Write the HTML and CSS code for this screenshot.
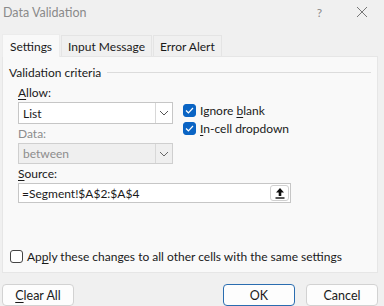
FILE: index.html
```html
<!DOCTYPE html>
<html lang="en">
<head>
  <meta charset="UTF-8">
  <title>Data Validation</title>
  <link rel="stylesheet" href="styles.css">
</head>
<body>
  <div class="dialog">
    <div class="titlebar">
      <span class="title">Data Validation</span>
      <span class="help">?</span>
      <svg class="close" width="12" height="12" viewBox="0 0 12 12">
        <path d="M1 1 L11 11 M11 1 L1 11" stroke="#777" stroke-width="1" fill="none"/>
      </svg>
    </div>

    <div class="tabs">
      <div class="tab active">Settings</div>
      <div class="tab">Input Message</div>
      <div class="tab">Error Alert</div>
    </div>

    <div class="panel">
      <div class="group-title">
        <span>Validation criteria</span>
        <div class="rule"></div>
      </div>

      <div class="criteria">
        <div class="col">
          <div class="label first"><u>A</u>llow:</div>
          <div class="select">
            <span class="value">List</span>
            <span class="arrow">
              <svg width="10" height="6" viewBox="0 0 10 6"><path d="M1 1 L5 5 L9 1" stroke="#555" fill="none"/></svg>
            </span>
          </div>
          <div class="label disabled">Data:</div>
          <div class="select disabled">
            <span class="value">between</span>
            <span class="arrow">
              <svg width="10" height="6" viewBox="0 0 10 6"><path d="M1 1 L5 5 L9 1" stroke="#666" fill="none"/></svg>
            </span>
          </div>
        </div>
        <div class="checks">
          <label class="check">
            <span class="box checked">
              <svg width="9" height="7" viewBox="0 0 9 7"><path d="M1 3.5 L3.4 5.8 L8 1" stroke="#fff" stroke-width="1.2" fill="none"/></svg>
            </span>
            <span>Ignore <u>b</u>lank</span>
          </label>
          <label class="check">
            <span class="box checked">
              <svg width="9" height="7" viewBox="0 0 9 7"><path d="M1 3.5 L3.4 5.8 L8 1" stroke="#fff" stroke-width="1.2" fill="none"/></svg>
            </span>
            <span><u>I</u>n-cell dropdown</span>
          </label>
        </div>
      </div>

      <div class="label"><u>S</u>ource:</div>
      <div class="source">
        <span class="value">=Segment!$A$2:$A$4</span>
        <span class="pick">
          <svg width="10" height="12" viewBox="0 0 10 12"><path d="M5 1 L9 5.5 L6.3 5.5 L6.3 9 L3.7 9 L3.7 5.5 L1 5.5 Z" fill="#111"/><rect x="0.5" y="10.3" width="9" height="1.4" fill="#111"/></svg>
        </span>
      </div>

      <label class="check apply">
        <span class="box"></span>
        <span>Ap<u>p</u>ly these changes to all other cells with the same settings</span>
      </label>
    </div>

    <div class="footer">
      <button class="btn"><u>C</u>lear All</button>
      <div class="spacer"></div>
      <button class="btn primary">OK</button>
      <button class="btn">Cancel</button>
    </div>
  </div>
</body>
</html>
```

FILE: styles.css
```css
body {
  margin: 0;
  background: #f0f0f0;
  font-family: Lato, "Noto Sans", sans-serif;
  font-size: 12px;
  color: #1a1a1a;
  overflow: hidden;
}
.dialog {
  width: 384px;
  height: 306px;
  display: flex;
  flex-direction: column;
}
.titlebar {
  height: 24px;
  display: flex;
  align-items: center;
  padding: 0 0 0 3px;
}
.title {
  color: #8a8a8a;
  font-size: 12.5px;
  flex: 1;
}
.help {
  color: #8a8a8a;
  margin-right: 34px;
}
.close {
  margin-right: 16px;
}
.tabs {
  display: flex;
  align-items: flex-end;
  height: 32px;
  margin-left: 2px;
}
.tab {
  height: 20px;
  line-height: 21px;
  padding: 0 6px;
  border: 1px solid #e4e4e4;
  border-bottom: none;
  background: #f0f0f0;
  margin-right: 1px;
}
.tab.active {
  height: 22px;
  line-height: 24px;
  padding: 0 7px;
  background: #f9f9f9;
  border-color: #ececec;
  margin-bottom: -1px;
  position: relative;
  z-index: 1;
}
.panel {
  margin: 0 6px 0 2px;
  height: 217px;
  background: #f9f9f9;
  border: 1px solid #e6e6e6;
  padding: 0 0 0 6px;
  box-sizing: border-box;
  display: flex;
  flex-direction: column;
}
.group-title {
  display: flex;
  align-items: center;
  height: 14px;
  margin-top: 8px;
}
.group-title span {
  margin-right: 6px;
}
.rule {
  flex: 1;
  height: 1px;
  background: #dcdcdc;
  margin-right: 6px;
}
.criteria {
  display: flex;
  padding-left: 9px;
}
.col {
  width: 155px;
}
.label {
  height: 18px;
  margin-top: 1px;
  line-height: 18px;
}
.label.first {
  margin-top: 5px;
}
.panel > .label {
  margin-left: 9px;
}
.label.disabled {
  color: #8c8c8c;
}
.select {
  height: 22px;
  box-sizing: border-box;
  border: 1px solid #c6c6c6;
  background: #fff;
  display: flex;
  align-items: center;
}
.select .value {
  flex: 1;
  padding-left: 4px;
}
.select .arrow {
  width: 16px;
  height: 20px;
  border-left: 1px solid #d8d8d8;
  display: flex;
  align-items: center;
  justify-content: center;
}
.select.disabled {
  height: 21px;
  background: #efefef;
  border-color: #cfcfcf;
  color: #8c8c8c;
}
.select.disabled .arrow {
  height: 19px;
}
.checks {
  display: flex;
  flex-direction: column;
  gap: 5px;
  margin-top: 25px;
  margin-left: 10px;
}
.check {
  display: flex;
  align-items: center;
  gap: 4px;
  height: 13px;
}
.box {
  width: 13px;
  height: 13px;
  box-sizing: border-box;
  border: 1px solid #555;
  border-radius: 3px;
  background: #fff;
  display: flex;
  align-items: center;
  justify-content: center;
}
.box.checked {
  background: #0a64c4;
  border-color: #0a64c4;
}
.source {
  margin-left: 9px;
  width: 273px;
  height: 20px;
  box-sizing: border-box;
  border: 1px solid #c6c6c6;
  background: #fff;
  display: flex;
  align-items: center;
}
.source .value {
  flex: 1;
  padding-left: 3px;
}
.pick {
  width: 19px;
  height: 16px;
  margin-right: 1px;
  border: 1px solid #d0d0d0;
  border-radius: 3px;
  box-sizing: border-box;
  display: flex;
  align-items: center;
  justify-content: center;
}
.apply {
  margin-top: 47px;
  margin-left: 1px;
}
.apply .box {
  border-color: #444;
}
.footer {
  display: flex;
  margin-top: 11px;
  padding: 0 6px 0 2px;
}
.spacer {
  flex: 1;
}
.btn {
  height: 22px;
  width: 72px;
  font-family: inherit;
  font-size: 12.5px;
  color: #1a1a1a;
  background: #fdfdfd;
  border: 1px solid #d2d2d2;
  border-radius: 4px;
  padding: 0;
}
.btn.primary {
  border-color: #2a6db0;
  margin-right: 11px;
}
u {
  text-decoration-thickness: 1px;
  text-underline-offset: 2px;
}
```
